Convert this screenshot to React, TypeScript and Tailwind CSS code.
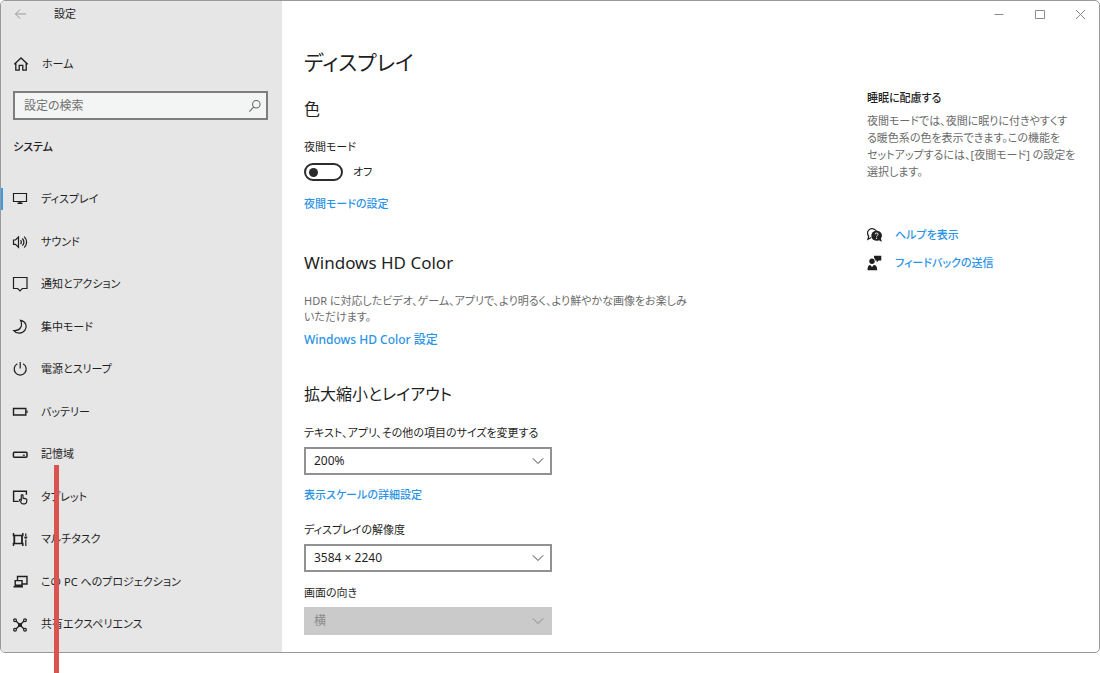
import { useState, type ReactNode } from "react";

function Icon({ children, className = "h-4 w-4" }: { children: ReactNode; className?: string }) {
  return (
    <svg
      viewBox="0 0 16 16"
      className={`${className} shrink-0`}
      fill="none"
      stroke="currentColor"
      strokeWidth="1.2"
      aria-hidden="true"
    >
      {children}
    </svg>
  );
}

const navItems: { label: string; icon: ReactNode }[] = [
  {
    label: "ディスプレイ",
    icon: (
      <>
        <path d="M1.500 2.500h13v8h-13z" />
        <path d="M8 11v2M5.500 12.300h5" strokeWidth="1.600" />
      </>
    ),
  },
  {
    label: "サウンド",
    icon: (
      <>
        <path d="M1.500 6h2l3-3v10.300l-3-3h-2z" />
        <path d="M8.600 6.200q1.400 2 0 4M10.400 4.500q3 3.700 0 7.200M12.300 2.700q4.600 5.500 0 10.800" />
      </>
    ),
  },
  {
    label: "通知とアクション",
    icon: <path d="M1.500 1.500h13.500v11H10.300L8 14.800 5.700 12.500H1.500z" />,
  },
  {
    label: "集中モード",
    icon: <path d="M8.600 1.400C14 2.400 15.600 7.600 13 11.200C10.400 15 4.500 15.200 1.800 11.600C8.400 12.200 11 6.500 8.600 1.400z" />,
  },
  {
    label: "電源とスリープ",
    icon: <path d="M8.200 1v6.500M5.300 2.800a6 6 0 1 0 5.800 0" />,
  },
  {
    label: "バッテリー",
    icon: (
      <>
        <path d="M1.500 4.500h12.300v6.500H1.500z" strokeWidth="1.400" />
        <path d="M15 6.500v2.600" />
      </>
    ),
  },
  {
    label: "記憶域",
    icon: (
      <>
        <rect x="1.400" y="5.200" width="13.600" height="5" rx="1" strokeWidth="1.500" />
        <path d="M10.800 8.200h2" />
      </>
    ),
  },
  {
    label: "タブレット",
    icon: (
      <>
        <path d="M6.700 12.400H1.600V2.200h12.800v3.500" strokeWidth="1.400" />
        <path d="M9.300 10.500V6.200q.9-1 1.700 0v3l3 .6q1 .3.900 1.300l-.5 2.400q-.4 1.300-1.700 1.300h-2q-1 0-1.600-1l-1.600-2.600q.4-1.500 1.800 0z" />
      </>
    ),
  },
  {
    label: "マルチタスク",
    icon: (
      <>
        <path d="M1.500 1v2.500h9.300V1M1.500 14V11.500h9.300V14" strokeWidth="1.500" />
        <path d="M2.300 3.500v8M10 3.500v8" strokeWidth="1.800" />
        <path d="M13.800 1.500v2.500M13.800 7.500v6.500" />
        <path d="M12.400 5.500h2.800" strokeWidth="2" />
      </>
    ),
  },
  {
    label: "この PC へのプロジェクション",
    icon: (
      <>
        <path d="M5.500 6.500V2.500h9.500v7.500H10" strokeWidth="1.400" />
        <path d="M3.200 6.600h6.800v4.600H3.200z" strokeWidth="1.400" />
        <path d="M1.500 12.700h9.500" strokeWidth="1.600" />
      </>
    ),
  },
  {
    label: "共有エクスペリエンス",
    icon: (
      <>
        <path d="M4 4l3 3M12 4L9 7M4 12l3-3M12 12L9 9" strokeWidth="1.400" />
        <circle cx="3" cy="3.200" r="1.400" />
        <circle cx="13" cy="3.200" r="1.400" />
        <circle cx="3" cy="12.800" r="1.400" />
        <circle cx="13" cy="12.800" r="1.400" />
        <circle cx="8" cy="8" r="1.500" fill="currentColor" />
      </>
    ),
  },
];

function SettingLink({ children, className = "" }: { children: ReactNode; className?: string }) {
  return (
    <a href="#" className={`block leading-5 font-medium text-[#2b93e6] ${className}`}>
      {children}
    </a>
  );
}

function SelectField({
  id,
  label,
  options,
  disabled = false,
  className = "",
}: {
  id: string;
  label: string;
  options: string[];
  disabled?: boolean;
  className?: string;
}) {
  return (
    <div className={className}>
      <label htmlFor={id} className="block leading-5">
        {label}
      </label>
      <div className="relative mt-1 w-full max-w-[248px]">
        <select
          id={id}
          disabled={disabled}
          className="block h-7 w-full appearance-none rounded-none border-2 border-[#919191] bg-white pr-8 pl-2 text-[12px] text-[#1f1f1f] opacity-100 disabled:border-[#cacaca] disabled:bg-[#cacaca] disabled:text-[#8a8a8a]"
        >
          {options.map((o) => (
            <option key={o}>{o}</option>
          ))}
        </select>
        <svg
          viewBox="0 0 12 12"
          className={`pointer-events-none absolute top-2 right-2 h-3 w-3 ${disabled ? "text-[#8a8a8a]" : "text-[#444444]"}`}
          fill="none"
          stroke="currentColor"
          aria-hidden="true"
        >
          <path d="M.8 3.300L6 8.500l5.200-5.200" />
        </svg>
      </div>
    </div>
  );
}

function Sidebar() {
  return (
    <aside className="flex w-[281px] shrink-0 flex-col bg-[#e6e6e6] pb-[6px]">
      <div className="flex h-[26px] items-center">
        <button aria-label="戻る" className="ml-3 flex h-6 w-4 items-center text-[#999999]">
          <Icon>
            <path d="M13 8H2.500M7 3.500L2.500 8 7 12.500" strokeWidth="1" />
          </Icon>
        </button>
        <span className="ml-[25px] text-[11px]">設定</span>
      </div>
      <a href="#" className="mt-[27px] flex h-5 items-center gap-[13px] pl-3">
        <Icon>
          <path d="M1.300 8.300L8 2l6.700 6.300M2.800 7v7.200h3.400V9.300h3.600v4.900h3.400V7" strokeWidth="1.300" />
        </Icon>
        ホーム
      </a>
      <label className="mr-[14px] ml-3 mt-[17px] flex h-[29px] items-center border-2 border-[#7d7d7d] bg-[#f3f5f4] pr-1 pl-[9px]">
        <input
          type="search"
          aria-label="設定の検索"
          placeholder="設定の検索"
          className="min-w-0 flex-1 bg-transparent text-[12px] outline-none placeholder:text-[#707070]"
        />
        <Icon className="h-[14px] w-[14px] text-[#666666]">
          <circle cx="9.500" cy="6" r="4.300" />
          <path d="M6.400 9.200L1.500 14.300" />
        </Icon>
      </label>
      <h2 className="mt-[17px] pl-3 leading-5 font-medium">システム</h2>
      <nav className="mt-[21px] flex flex-1 flex-col">
        {navItems.map((item, i) => (
          <a
            key={item.label}
            href="#"
            aria-current={i === 0 ? "page" : undefined}
            className="flex min-h-10 flex-1 items-center"
          >
            <span className={i === 0 ? "h-[22px] w-[2px] bg-[#3a9be8]" : "w-[2px]"} />
            <span className="ml-[9px] flex items-center gap-[13px]">
              <Icon>{item.icon}</Icon>
              {item.label}
            </span>
          </a>
        ))}
      </nav>
    </aside>
  );
}

function WindowControls() {
  return (
    <div className="flex h-[26px] items-center justify-end gap-[25px] pr-[10px] text-[#8a8a8a]">
      <button aria-label="最小化">
        <Icon>
          <path d="M3.500 8.500h9" strokeWidth="1" />
        </Icon>
      </button>
      <button aria-label="最大化">
        <Icon>
          <path d="M3.500 4.500h9v8h-9z" strokeWidth="1" />
        </Icon>
      </button>
      <button aria-label="閉じる">
        <Icon>
          <path d="M3 4l9 9M12 4l-9 9" strokeWidth="1" />
        </Icon>
      </button>
    </div>
  );
}

function DisplaySettings() {
  const [night, setNight] = useState(false);
  return (
    <main className="min-w-0 flex-1 pt-[15px] pb-[17px]">
      <h1 className="text-[21px] leading-10">ディスプレイ</h1>

      <h2 className="mt-[15px] text-[16px] leading-6">色</h2>
      <p className="mt-4 leading-5" id="night-label">
        夜間モード
      </p>
      <div className="mt-[5px] flex h-5 items-center gap-[10px]">
        <button
          role="switch"
          aria-checked={night}
          aria-labelledby="night-label"
          onClick={() => setNight(!night)}
          className={`flex h-[18px] w-[39px] items-center rounded-full border-2 border-[#2b2b2b] px-[3px] ${night ? "justify-end" : "justify-start"}`}
        >
          <span className="h-[9px] w-[9px] rounded-full bg-[#2b2b2b]" />
        </button>
        {night ? "オン" : "オフ"}
      </div>
      <SettingLink className="mt-3">夜間モードの設定</SettingLink>

      <h2 className="mt-[37px] text-[17px] leading-6">Windows HD Color</h2>
      <p className="mt-[18px] leading-4 text-[#6b6b6b]">
        HDR に対応したビデオ、ゲーム、アプリで、より明るく、より鮮やかな画像をお楽しみ
        <br />
        いただけます。
      </p>
      <SettingLink className="mt-[5px] text-[12px]">Windows HD Color 設定</SettingLink>

      <h2 className="mt-8 text-[16px] leading-6">拡大縮小とレイアウト</h2>
      <SelectField
        id="scale"
        label="テキスト、アプリ、その他の項目のサイズを変更する"
        options={["200%"]}
        className="mt-[17px]"
      />
      <SettingLink className="mt-[10px]">表示スケールの詳細設定</SettingLink>
      <SelectField id="resolution" label="ディスプレイの解像度" options={["3584 × 2240"]} className="mt-[15px]" />
      <SelectField id="orientation" label="画面の向き" options={["横"]} disabled className="mt-[11px]" />
    </main>
  );
}

function HelpPanel() {
  return (
    <aside className="w-[232px] shrink-0 pt-[61px]">
      <h2 className="leading-5 font-medium">睡眠に配慮する</h2>
      <p className="mt-1 leading-[17px] whitespace-nowrap text-[#6b6b6b]">
        夜間モードでは、夜間に眠りに付きやすくす
        <br />
        る暖色系の色を表示できます。この機能を
        <br />
        セットアップするには、[夜間モード] の設定を
        <br />
        選択します。
      </p>
      <div className="mt-[45px] flex items-center gap-3">
        <Icon>
          <path d="M4.300 10.500L.9 12.300l.8-3.200C-1.500 5 2.600.3 7.300 2.200q1.500.7 2 1.800" />
          <path
            d="M9.500 3.800c-6.800 0-6.900 9.900 0 9.900q1.300 0 2.300-.5l3.100 1.600-1-3.400c2.500-3 .3-7.600-4.400-7.600z"
            fill="currentColor"
            stroke="none"
          />
          <path d="M8.100 7.300q.1-1.300 1.500-1.300t1.500 1.200q0 .7-.8 1.200-.7.500-.7 1.200M9.600 10.700v1.200" stroke="white" strokeWidth="1" />
        </Icon>
        <SettingLink>ヘルプを表示</SettingLink>
      </div>
      <div className="mt-2 flex items-center gap-3">
        <Icon>
          <g fill="currentColor" stroke="none">
            <circle cx="5" cy="6.300" r="2.700" />
            <path d="M.5 15.200q0-5.300 2.700-5.300l1.800 2 1.800-2q3.400 0 3.400 5.300z" />
            <path d="M7 .8h7.300v4.700h-2.600l-2 2V5.500H8.300Q8.300 3.700 7 2.800z" />
          </g>
        </Icon>
        <SettingLink>フィードバックの送信</SettingLink>
      </div>
    </aside>
  );
}

export default function App() {
  return (
    <div className="relative min-h-screen bg-white pb-5 font-['Noto_Sans','Noto_Sans_CJK_JP',sans-serif] text-[11px] text-[#1f1f1f] [font-feature-settings:'palt']">
      <div className="flex overflow-hidden rounded-[5px] border border-[#999999]">
        <Sidebar />
        <div className="min-w-0 flex-1">
          <WindowControls />
          <div className="flex gap-6 pl-[22px]">
            <DisplaySettings />
            <HelpPanel />
          </div>
        </div>
      </div>
      <div className="pointer-events-none absolute top-[465px] bottom-0 left-[54px] w-[5px] bg-[#d9534f]" />
    </div>
  );
}
